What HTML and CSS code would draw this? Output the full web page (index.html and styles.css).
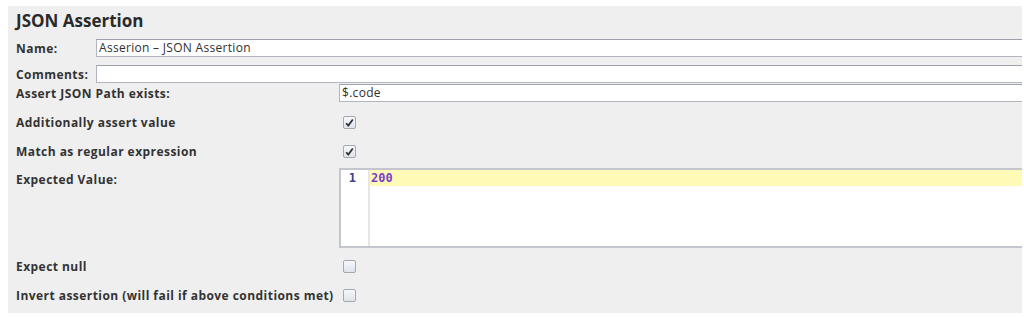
FILE: index.html
```html
<!DOCTYPE html>
<html lang="en">
<head>
    <meta charset="UTF-8">
    <title>JSON Assertion</title>
    <link rel="stylesheet" href="styles.css">
</head>
<body>
    <div class="panel">
        <h1 class="title">JSON Assertion</h1>

        <div class="row row-name">
            <label class="label label-short">Name:</label>
            <div class="field">Asserion – JSON Assertion</div>
        </div>

        <div class="row row-comments">
            <label class="label label-short">Comments:</label>
            <div class="field"></div>
        </div>

        <div class="row row-path">
            <label class="label label-long">Assert JSON Path exists:</label>
            <div class="field">$.code</div>
        </div>

        <div class="row row-check first-check">
            <label class="label label-long">Additionally assert value</label>
            <span class="checkbox checked">
                <svg width="9" height="9" viewBox="0 0 9 9"><path d="M1.2 5.2 L3.3 7.6 L7.8 1.6" fill="none" stroke="#2a2d33" stroke-width="1.7"/></svg>
            </span>
        </div>

        <div class="row row-check">
            <label class="label label-long">Match as regular expression</label>
            <span class="checkbox checked">
                <svg width="9" height="9" viewBox="0 0 9 9"><path d="M1.2 5.2 L3.3 7.6 L7.8 1.6" fill="none" stroke="#2a2d33" stroke-width="1.7"/></svg>
            </span>
        </div>

        <div class="row row-editor">
            <label class="label label-long">Expected Value:</label>
            <div class="editor">
                <div class="gutter">1</div>
                <div class="code">
                    <div class="current-line">200</div>
                </div>
            </div>
        </div>

        <div class="row row-check null-check">
            <label class="label label-long">Expect null</label>
            <span class="checkbox"></span>
        </div>

        <div class="row row-check">
            <label class="label label-long">Invert assertion (will fail if above conditions met)</label>
            <span class="checkbox"></span>
        </div>
    </div>
</body>
</html>
```

FILE: styles.css
```css
body {
    margin: 6px 2px 5px 8px;
    background: #ffffff;
    font-family: 'Open Sans', 'DejaVu Sans', sans-serif;
    color: #2e2e2e;
}

.panel {
    background: #efefef;
    height: 307px;
    padding-left: 8px;
    box-sizing: border-box;
    overflow: hidden;
    display: flex;
    flex-direction: column;
}

.title {
    margin: 5px 0 0 0;
    height: 20px;
    line-height: 20px;
    font-size: 17px;
    font-weight: bold;
    color: #2a2a2a;
}

.row {
    display: flex;
    align-items: center;
}

.label {
    font-size: 12px;
    font-weight: bold;
    letter-spacing: 0.45px;
    color: #333333;
    white-space: nowrap;
}

.label-short {
    width: 80px;
    flex: none;
}

.label-long {
    width: 323px;
    flex: none;
}

.field {
    flex: 1;
    height: 18px;
    box-sizing: border-box;
    border: 1px solid #b1b5bd;
    border-top-color: #9da1a9;
    border-right: none;
    background: #ffffff;
    font-size: 12px;
    letter-spacing: 0.3px;
    line-height: 16px;
    padding-left: 2px;
    color: #303030;
}

.row-name {
    margin-top: 8px;
    height: 18px;
}

.row-comments {
    margin-top: 8px;
    height: 18px;
}

.row-path {
    margin-top: 1px;
    height: 18px;
}

.row-check {
    margin-top: 1px;
    height: 28px;
}

.first-check {
    margin-top: 6px;
}

.null-check {
    margin-top: 4px;
}

.checkbox {
    width: 13px;
    height: 13px;
    margin-left: 4px;
    box-sizing: border-box;
    border: 1px solid #a3a8b2;
    border-radius: 2px;
    background: linear-gradient(#f7f8fa, #dfe3ea);
    display: flex;
    align-items: center;
    justify-content: center;
}

.row-editor {
    margin-top: 3px;
    height: 80px;
    align-items: flex-start;
}

.row-editor .label {
    margin-top: 3px;
}

.editor {
    flex: 1;
    height: 80px;
    box-sizing: border-box;
    border: 2px solid #c3c6cc;
    border-right: none;
    background: #ffffff;
    display: flex;
    font-family: 'DejaVu Sans Mono', monospace;
    font-size: 12px;
    font-weight: bold;
}

.gutter {
    width: 29px;
    flex: none;
    border-right: 2px solid #e6e6e6;
    text-align: right;
    padding-right: 12px;
    box-sizing: border-box;
    line-height: 16px;
    color: #3b3f8f;
}

.code {
    flex: 1;
}

.current-line {
    background: #fffbb6;
    height: 16px;
    line-height: 16px;
    padding-left: 1px;
    color: #7a3fc6;
}
```
